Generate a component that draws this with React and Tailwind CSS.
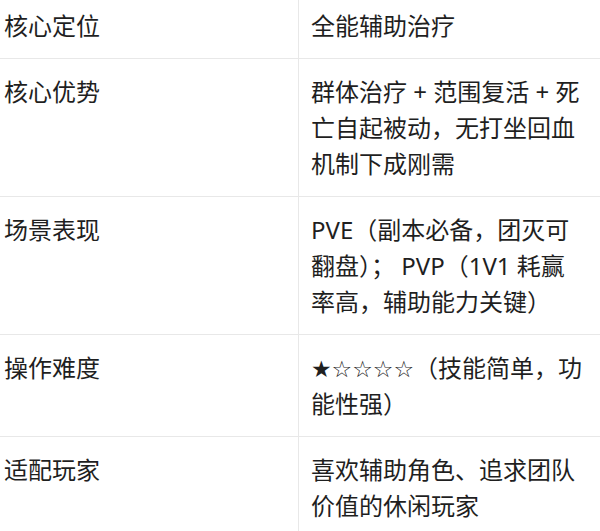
const ROWS = [
  { label: "核心定位", value: "全能辅助治疗" },
  { label: "核心优势", value: "群体治疗 + 范围复活 + 死亡自起被动，无打坐回血机制下成刚需" },
  { label: "场景表现", value: "PVE（副本必备，团灭可翻盘）； PVP（1V1 耗赢率高，辅助能力关键）" },
  {
    label: "操作难度",
    value: (
      <>
        <span className="font-['DejaVu_Sans',sans-serif] text-[23px] leading-none">★☆☆☆☆</span>
        （技能简单，功能性强）
      </>
    ),
  },
  { label: "适配玩家", value: "喜欢辅助角色、追求团队价值的休闲玩家" },
];

export default function App() {
  return (
    <div className="h-[531px] w-[600px] overflow-hidden bg-white font-['Noto_Sans','Noto_Sans_CJK_SC',sans-serif] text-[24px] leading-[36px] text-[#1f1f1f]">
      <div className="-mt-[7px]">
        {ROWS.map((row) => (
          <div
            key={row.label}
            className="grid grid-cols-[299px_1fr] border-b border-[#e8e8e8]"
          >
            <div className="border-r border-[#e8e8e8] pb-[14px] pl-[4px] pt-[15px]">
              {row.label}
            </div>
            <div className="pb-[14px] pl-[12px] pr-[15px] pt-[15px]">{row.value}</div>
          </div>
        ))}
      </div>
    </div>
  );
}
